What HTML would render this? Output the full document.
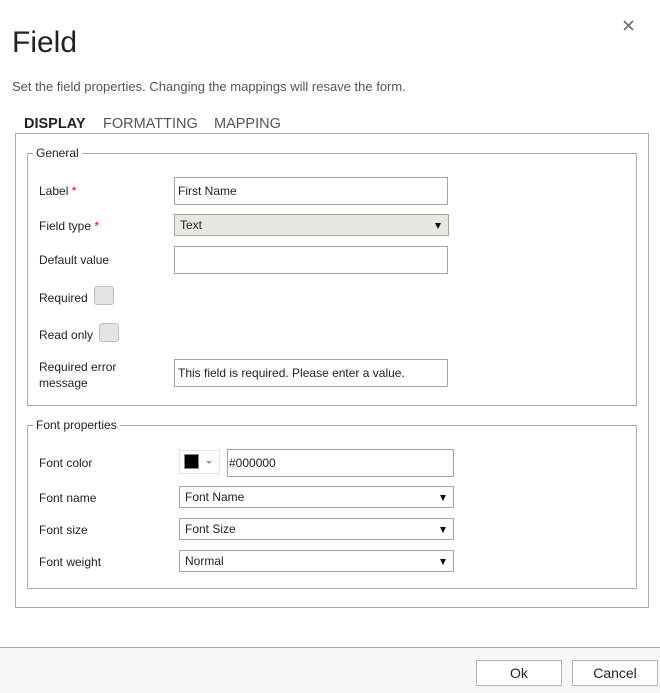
<!DOCTYPE html>
<html><head><meta charset="utf-8"><style>
*{box-sizing:border-box;margin:0;padding:0}
body{width:660px;height:693px;background:#fff;font-family:"Liberation Sans",sans-serif;position:relative;overflow:hidden;color:#222}
.a{position:absolute}
.lbl{position:absolute;font-size:12px;color:#222;left:39px}
.req{color:#e00}
.inp{position:absolute;border:1px solid #a6a6a6;background:#fff;font-size:12px;padding-left:3px;display:flex;align-items:center}
.sel{position:absolute;border:1px solid #a6a6a6;background:#fff;font-size:12px;padding-left:5px;display:flex;align-items:center}
.sel:after{content:"";position:absolute;right:7px;top:50%;margin-top:-2px;border-left:3.5px solid transparent;border-right:3.5px solid transparent;border-top:6px solid #111}
.box{position:absolute;border:1px solid #a9a9ad}
.leg{position:absolute;background:#fff;font-size:12px;padding:0 2px;color:#222}
.cb{position:absolute;width:20px;height:19px;border:1px solid #c0c0c0;border-radius:3px;background:#e3e3e3}
.btn{position:absolute;border:1px solid #b5b5b5;background:#fff;font-size:14px;display:flex;align-items:center;justify-content:center;color:#222}
</style></head><body>
<div class="a" style="left:12px;top:26px;font-size:30px;color:#222">Field</div>
<svg class="a" style="left:623px;top:20px" width="11" height="11" viewBox="0 0 11 11"><path d="M1 1L10 10M10 1L1 10" stroke="#707070" stroke-width="1.8"/></svg>
<div class="a" style="left:12px;top:79px;font-size:13px;color:#555">Set the field properties. Changing the mappings will resave the form.</div>
<div class="a" style="left:24px;top:116px;font-size:14.5px;font-weight:bold;color:#222">DISPLAY</div>
<div class="a" style="left:103px;top:116px;font-size:14.5px;color:#555">FORMATTING</div>
<div class="a" style="left:214px;top:116px;font-size:14.5px;color:#555">MAPPING</div>

<div class="box" style="left:15px;top:133px;width:634px;height:475px"></div>
<div class="box" style="left:27px;top:153px;width:610px;height:253px"></div>
<div class="leg" style="left:33px;top:146px;padding:0 3px">General</div>

<div class="lbl" style="top:184px">Label <span class="req">*</span></div>
<div class="inp" style="left:174px;top:177px;width:274px;height:28px">First Name</div>
<div class="lbl" style="top:219px">Field type <span class="req">*</span></div>
<div class="sel" style="left:174px;top:214px;width:275px;height:22px;background:#e8e8e3">Text</div>
<div class="lbl" style="top:253px">Default value</div>
<div class="inp" style="left:174px;top:246px;width:274px;height:28px"></div>
<div class="lbl" style="top:291px">Required</div>
<div class="cb" style="left:94px;top:286px"></div>
<div class="lbl" style="top:328px">Read only</div>
<div class="cb" style="left:99px;top:323px"></div>
<div class="lbl" style="top:359px;line-height:16px">Required error<br>message</div>
<div class="inp" style="left:174px;top:359px;width:274px;height:28px">This field is required. Please enter a value.</div>

<div class="box" style="left:27px;top:425px;width:610px;height:164px"></div>
<div class="leg" style="left:33px;top:418px;padding:0 3px">Font properties</div>

<div class="lbl" style="top:456px">Font color</div>
<div class="a" style="left:179px;top:450px;width:41px;height:24px;border:1px solid #e3e3e3"></div>
<div class="a" style="left:184px;top:454px;width:15px;height:15px;background:#000;border:1px solid #888"></div>
<div class="a" style="left:206px;top:461px;border-left:3px solid transparent;border-right:3px solid transparent;border-top:3px solid #999"></div>
<div class="inp" style="left:227px;top:449px;width:227px;height:28px;padding-left:1px">#000000</div>
<div class="lbl" style="top:491px">Font name</div>
<div class="sel" style="left:179px;top:486px;width:275px;height:22px">Font Name</div>
<div class="lbl" style="top:523px">Font size</div>
<div class="sel" style="left:179px;top:518px;width:275px;height:22px">Font Size</div>
<div class="lbl" style="top:555px">Font weight</div>
<div class="sel" style="left:179px;top:550px;width:275px;height:22px">Normal</div>

<div class="a" style="left:0;top:647px;width:660px;height:46px;background:#f7f7f7;border-top:1px solid #a9a9a9"></div>
<div class="btn" style="left:476px;top:660px;width:86px;height:26px">Ok</div>
<div class="btn" style="left:572px;top:660px;width:86px;height:26px">Cancel</div>
</body></html>
